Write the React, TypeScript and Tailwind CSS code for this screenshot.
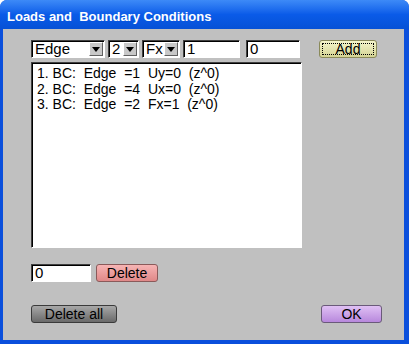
const rows = [
  "1. BC:  Edge  =1  Uy=0  (z^0)",
  "2. BC:  Edge  =4  Ux=0  (z^0)",
  "3. BC:  Edge  =2  Fx=1  (z^0)",
];

const font = { fontFamily: '"Liberation Sans", Arial, sans-serif' };

const Select = ({ value, width }: { value: string; width: string }) => (
  <div
    className={`${width} h-[18px] flex items-stretch bg-white border border-t-[#404040] border-l-[#404040] border-b-white border-r-white shadow-[inset_1px_1px_0_#000]`}
  >
    <div className="flex-1 pl-[3px] text-[15px] leading-[16px] text-black">{value}</div>
    <div className="w-[14px] m-[1px] bg-[#c8c8c8] border border-t-white border-l-white border-b-[#606060] border-r-[#606060] flex items-center justify-center">
      <svg width="8" height="5" viewBox="0 0 8 5">
        <polygon points="0,0 8,0 4,5" fill="#000" />
      </svg>
    </div>
  </div>
);

const Input = ({ value, width }: { value: string; width: string }) => (
  <div
    className={`${width} h-[18px] bg-white border border-t-[#404040] border-l-[#404040] border-b-white border-r-white shadow-[inset_1px_1px_0_#000] pl-[3px] text-[15px] leading-[16px] text-black`}
  >
    {value}
  </div>
);

export default function App() {
  return (
    <div className="w-[409px] h-[344px] bg-[#0a4fdc] rounded-t-[7px] flex flex-col overflow-hidden" style={font}>
      <div className="h-[29px] shrink-0 bg-gradient-to-b from-[#3d8af7] via-[#0a5be8] to-[#0651d6] flex items-center pl-[7px] pt-[4px]">
        <span className="text-white font-bold text-[13px] whitespace-pre">
          Loads and  Boundary Conditions
        </span>
      </div>
      <div className="flex-1 mx-[3px] mr-[5px] mb-[4px] bg-[#c0c0c0] flex flex-col pl-[28px] pt-[11px]">
        <div className="flex items-center">
          <Select value="Edge" width="w-[74px]" />
          <div className="w-[3px]" />
          <Select value="2" width="w-[31px]" />
          <div className="w-[3px]" />
          <Select value="Fx" width="w-[38px]" />
          <div className="w-[3px]" />
          <Input value="1" width="w-[57px]" />
          <div className="w-[6px]" />
          <Input value="0" width="w-[54px]" />
          <button className="ml-[19px] w-[58px] h-[18px] rounded-[3px] border border-[#8a8a5a] bg-gradient-to-b from-[#f6f6cc] to-[#d4d494] flex items-center justify-center p-[2px]">
            <span className="w-full h-full border border-dotted border-black flex items-center justify-center text-[14px] leading-none text-black">
              Add
            </span>
          </button>
        </div>
        <div className="mt-[4px] w-[271px] h-[186px] bg-white border border-t-[#404040] border-l-[#404040] border-b-white border-r-white shadow-[inset_1px_1px_0_#000] pt-[3px] pl-[5px]">
          {rows.map((r) => (
            <div key={r} className="whitespace-pre text-[14px] leading-[15.5px] text-black">
              {r}
            </div>
          ))}
        </div>
        <div className="mt-[16px] flex items-center">
          <Input value="0" width="w-[60px]" />
          <button className="ml-[5px] w-[62px] h-[18px] rounded-[3px] border border-[#8a5a5a] bg-gradient-to-b from-[#f6b4b4] to-[#e08888] text-[14px] leading-none text-black">
            Delete
          </button>
        </div>
        <div className="mt-[23px] flex items-center pr-[22px]">
          <button className="w-[86px] h-[18px] rounded-[3px] border border-[#3a3a3a] bg-gradient-to-b from-[#a8a8a8] to-[#6a6a6a] text-[14px] leading-none text-black">
            Delete all
          </button>
          <div className="flex-1" />
          <button className="w-[61px] h-[18px] rounded-[3px] border border-[#6a5a7a] bg-gradient-to-b from-[#e0c0f4] to-[#b888dc] text-[14px] leading-none text-black">
            OK
          </button>
        </div>
      </div>
    </div>
  );
}
